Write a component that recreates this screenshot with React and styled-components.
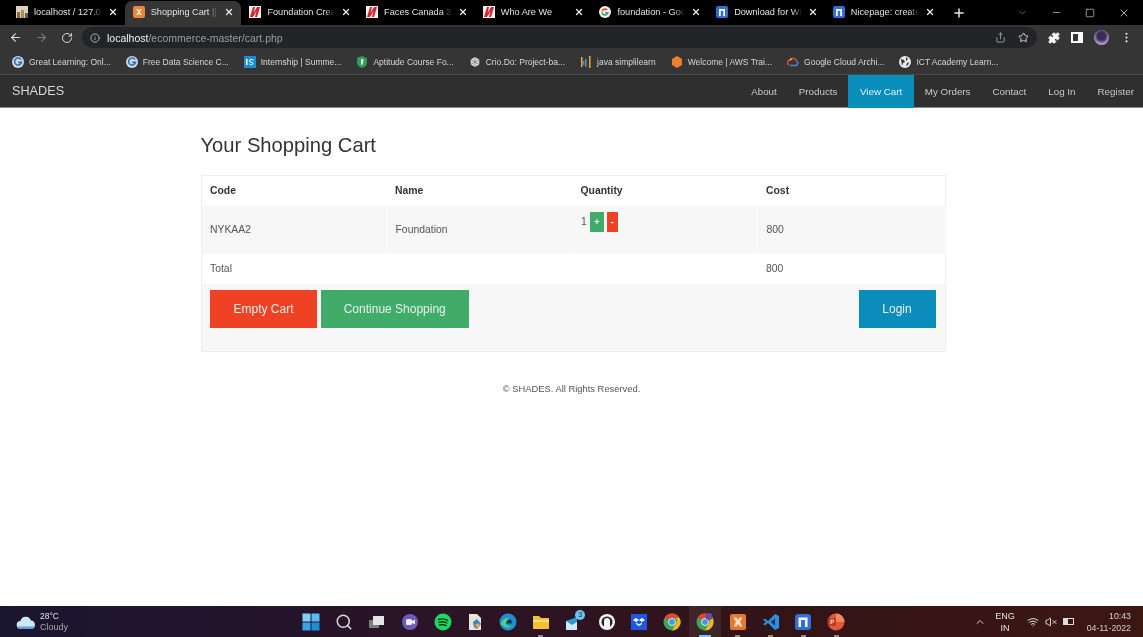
import styled, { createGlobalStyle } from "styled-components";
import {
  ArrowLeft,
  ArrowRight,
  RotateCw,
  Info,
  Share,
  Star,
  Puzzle,
  X,
  Plus,
  Minus,
  Square,
  ChevronDown,
  ChevronUp,
  Search,
  Wifi,
  VolumeX,
  MoreVertical,
} from "lucide-react";

const GlobalStyle = createGlobalStyle`
  html, body {
    margin: 0;
    padding: 0;
    background: #fff;
    font-family: "Liberation Sans", Arial, sans-serif;
  }
  * { box-sizing: border-box; }
`;

// favicons used in tabs and bookmarks
function Fav({ kind, size = 12 }) {
  const common = { width: size, height: size, viewBox: "0 0 12 12" };
  if (kind === "pma")
    return (
      <svg {...common}>
        <rect width="12" height="12" fill="#d8d2c4" />
        <rect x="1" y="6" width="3" height="6" fill="#8a6a3a" />
        <rect x="5" y="4" width="3" height="8" fill="#b58b4a" />
        <rect x="9" y="7" width="3" height="5" fill="#5a5a60" />
      </svg>
    );
  if (kind === "xampp")
    return (
      <svg {...common}>
        <rect width="12" height="12" rx="2" fill="#e8873a" />
        <path d="M3 3l2.2 3L3 9h2l1-1.4L7 9h2L6.800 6 9 3H7L6 4.400 5 3z" fill="#fbe3c8" />
      </svg>
    );
  if (kind === "nykaa")
    return (
      <svg {...common}>
        <rect width="12" height="12" fill="#f3f0ee" />
        <path d="M1 11L4 1h2L4.500 7 8 1h3L8 11H6l1.500-6L4 11z" fill="#d8232f" />
      </svg>
    );
  if (kind === "google")
    return (
      <svg {...common}>
        <circle cx="6" cy="6" r="6" fill="#f4f4f4" />
        <path d="M6 2.200A3.800 3.800 0 0 0 2.600 4.300L4 5.300A2.200 2.200 0 0 1 7.500 4.500L8.700 3.300A3.800 3.800 0 0 0 6 2.200z" fill="#ea4335" />
        <path d="M2.600 4.300a3.800 3.800 0 0 0 0 3.400L4 6.700a2.200 2.200 0 0 1 0-1.400z" fill="#fbbc05" />
        <path d="M2.600 7.700A3.800 3.800 0 0 0 8.700 8.700L7.400 7.700A2.200 2.200 0 0 1 4 6.700z" fill="#34a853" />
        <path d="M9.800 6H6v1.500h2a2 2 0 0 1-.6.200l1.300 1A3.800 3.800 0 0 0 9.800 6z" fill="#4285f4" />
      </svg>
    );
  if (kind === "nicepage")
    return (
      <svg {...common}>
        <rect width="12" height="12" rx="2" fill="#2f6fd6" />
        <path d="M3 10V3h6v7H7.300V4.700H4.700V10z" fill="#fff" />
      </svg>
    );
  if (kind === "gl")
    return (
      <svg {...common}>
        <circle cx="6" cy="6" r="6" fill="#cfd8e6" />
        <path d="M9 3.600A3.500 3.500 0 1 0 9.500 6.400H6.200" fill="none" stroke="#2f6db5" strokeWidth="1.600" />
      </svg>
    );
  if (kind === "is")
    return (
      <svg {...common}>
        <rect width="12" height="12" fill="#1b8fd6" />
        <path d="M9.500 4.200C8 3 5.400 3.200 5.400 4.800c0 1.900 3.600 1 3.600 2.700 0 1.200-2.200 1.300-3.700.5" fill="none" stroke="#fff" strokeWidth="1" />
        <path d="M2 3h1.500v6H2z" fill="#fff" />
      </svg>
    );
  if (kind === "apt")
    return (
      <svg {...common}>
        <path d="M6 0l5 2v5c0 2.500-2.500 4-5 5-2.500-1-5-2.500-5-5V2z" fill="#2f9e55" />
        <path d="M5 3h2.400v3L6 9H5z" fill="#e8f5ec" />
      </svg>
    );
  if (kind === "crio")
    return (
      <svg {...common}>
        <path d="M6 1l4.300 2.500v5L6 11 1.700 8.500v-5z" fill="#d8d8d8" />
        <path d="M6 1v10M1.700 3.500l8.600 5M10.300 3.500l-8.600 5" stroke="#666" strokeWidth=".6" />
      </svg>
    );
  if (kind === "java")
    return (
      <svg {...common}>
        <rect x="1" y="1" width="1.600" height="10" fill="#e2a63b" />
        <rect x="5" y="3" width="1.600" height="8" fill="#4c8fc9" />
        <rect x="9" y="0" width="1.600" height="12" fill="#e2a63b" />
        <rect x="3" y="5" width="1.400" height="4" fill="#4c8fc9" />
      </svg>
    );
  if (kind === "aws")
    return (
      <svg {...common}>
        <path d="M6 0l5 3v6l-5 3-5-3V3z" fill="#ee7f2d" />
      </svg>
    );
  if (kind === "gcloud")
    return (
      <svg {...common}>
        <path d="M2 9a2.500 2.500 0 0 1 1-4.800 3.500 3.500 0 0 1 6.500 1" fill="none" stroke="#ea4335" strokeWidth="1.600" />
        <path d="M9.500 5.200A2.300 2.300 0 0 1 9 9.500H6" fill="none" stroke="#4285f4" strokeWidth="1.600" />
        <path d="M6 9.500H3" fill="none" stroke="#34a853" strokeWidth="1.600" />
        <path d="M3 4.200a3 3 0 0 1 2-1.500" fill="none" stroke="#fbbc05" strokeWidth="1.600" />
      </svg>
    );
  return (
    <svg {...common}>
      <circle cx="6" cy="6" r="6" fill="#e8eaed" />
      <path d="M2 3l3 1 1 2-2 1-1 3zM7 1l2 2-2 2zM8 7l2-1-1 3-2 1z" fill="#35363a" />
    </svg>
  );
}

// taskbar pictures
function TaskIcon({ kind }) {
  const common = { width: 18, height: 18, viewBox: "0 0 18 18" };
  switch (kind) {
    case "win":
      return (
        <svg {...common}>
          <rect x="0.500" y="0.500" width="8" height="8" fill="#7fd2f5" />
          <rect x="9.500" y="0.500" width="8" height="8" fill="#55bdf0" />
          <rect x="0.500" y="9.500" width="8" height="8" fill="#35a5e6" />
          <rect x="9.500" y="9.500" width="8" height="8" fill="#1f8cd6" />
        </svg>
      );
    case "task":
      return (
        <svg {...common}>
          <rect x="1" y="7" width="10" height="8" fill="#7d7d7d" />
          <rect x="5" y="3" width="11" height="9" fill="#e4e4e4" />
        </svg>
      );
    case "meet":
      return (
        <svg {...common}>
          <circle cx="9" cy="9" r="8" fill="#6a5ac0" />
          <rect x="5" y="6" width="6" height="6" rx="1.500" fill="#f0eefa" />
          <path d="M11 8l3-1.500v5L11 10z" fill="#f0eefa" />
        </svg>
      );
    case "spotify":
      return (
        <svg {...common}>
          <circle cx="9" cy="9" r="8.500" fill="#1ed760" />
          <path d="M4.500 6.500c3-1 6.500-.7 9 .8M5 9.300c2.500-.8 5.500-.5 7.800.7M5.500 12c2-.6 4.500-.4 6.500.6" fill="none" stroke="#10301c" strokeWidth="1.400" strokeLinecap="round" />
        </svg>
      );
    case "file":
      return (
        <svg {...common}>
          <path d="M3 1h8l4 4v12H3z" fill="#e9e4d8" />
          <path d="M7 9l4-3 4 5-4 5-3-2z" fill="#2f86c9" />
          <path d="M9 12l3-2 2 2-3 3z" fill="#f0a830" />
        </svg>
      );
    case "edge":
      return (
        <svg {...common}>
          <circle cx="9" cy="9" r="8.500" fill="#1c8fd0" />
          <path d="M2 11c1-5 6-7 9-5 2 1 2.500 3 1.500 4H7c0 3 4 4 7 2.500A8 8 0 0 1 2 11z" fill="#55d07c" />
          <path d="M7 10.500h5.500c1-1.500.5-3-1-4.200C9 5.500 7.300 8 7 10.500z" fill="#0c3c66" />
        </svg>
      );
    case "folder":
      return (
        <svg {...common}>
          <path d="M1 3h6l2 2h8v11H1z" fill="#f2c230" />
          <rect x="1" y="7" width="16" height="2" fill="#fbe27a" />
        </svg>
      );
    case "mail":
      return (
        <svg {...common}>
          <path d="M1 8l11-4v13H1z" fill="#2b9ad6" />
          <path d="M1 8l6 4 5-3v8H1z" fill="#cbe9f8" />
        </svg>
      );
    case "circle":
      return (
        <svg {...common}>
          <circle cx="9" cy="9" r="8" fill="#f2f2f2" />
          <circle cx="9" cy="9" r="5.500" fill="#262020" />
          <path d="M6 15V8a3 3 0 0 1 6 0v7z" fill="#f2f2f2" />
        </svg>
      );
    case "dropbox":
      return (
        <svg {...common}>
          <rect x="1" y="1" width="16" height="16" fill="#1f58e0" />
          <path d="M6 5l3 2-3 2-3-2zM12 5l3 2-3 2-3-2zM6 9.500l3 2 3-2v1.500l-3 2-3-2z" fill="#fff" />
        </svg>
      );
    case "chrome":
    case "canary":
      return (
        <svg {...common}>
          <circle cx="9" cy="9" r="8.500" fill="#3aa757" />
          <path d="M9 .5a8.500 8.500 0 0 1 7.400 4.250H9a4.250 4.250 0 0 0-3.700 2.100L1.600 4.750A8.500 8.500 0 0 1 9 .5z" fill="#ea4335" />
          <path d="M16.400 4.750A8.500 8.500 0 0 1 9 17.500l3.700-6.400a4.250 4.250 0 0 0 0-6.350z" fill="#f3b71c" />
          <circle cx="9" cy="9" r="3.500" fill="#4d90e8" stroke="#fff" strokeWidth=".8" />
          {kind === "canary" && <circle cx="13" cy="3.500" r="3.500" fill="#6a4a9a" />}
        </svg>
      );
    case "xampp":
      return (
        <svg {...common}>
          <rect x="1" y="1" width="16" height="16" rx="2" fill="#e8772e" />
          <path d="M4.500 4.500h3L9 7l1.500-2.500h3L11 9l2.500 4.500h-3L9 11l-1.500 2.500h-3L7 9z" fill="#fbe3c8" />
        </svg>
      );
    case "vscode":
      return (
        <svg {...common}>
          <path d="M13 1l4 2v12l-4 2-7-7-3 2.500L1 11l3-2-3-2 2-1.500L6 8z" fill="#2a8fe0" />
          <path d="M13 5.500L9 9l4 3.500z" fill="#1f2240" />
        </svg>
      );
    case "nicepage":
      return (
        <svg {...common}>
          <rect x="1" y="1" width="16" height="16" rx="3" fill="#2f6fd6" />
          <path d="M4.500 14V4.500h9V14H11V7H7v7z" fill="#fff" />
        </svg>
      );
    default:
      return (
        <svg {...common}>
          <circle cx="9" cy="9" r="8.500" fill="#e2583a" />
          <path d="M9 .5a8.500 8.500 0 0 1 8.500 8.500H9z" fill="#f08a5d" />
          <rect x="1" y="5" width="8" height="8" rx="1" fill="#c4391d" />
          <path d="M4 7v4M4 7h1.500a1.200 1.200 0 0 1 0 2.400H4" fill="none" stroke="#fff" strokeWidth=".9" />
        </svg>
      );
  }
}

const tabs = [
  { id: 1, fav: "pma", title: "localhost / 127.0.0" },
  { id: 2, fav: "xampp", title: "Shopping Cart || S", active: true },
  { id: 3, fav: "nykaa", title: "Foundation Crea" },
  { id: 4, fav: "nykaa", title: "Faces Canada 3 In" },
  { id: 5, fav: "nykaa", title: "Who Are We" },
  { id: 6, fav: "google", title: "foundation - Goo" },
  { id: 7, fav: "nicepage", title: "Download for Wi" },
  { id: 8, fav: "nicepage", title: "Nicepage: create" },
];

const bookmarks = [
  { fav: "gl", title: "Great Learning: Onl..." },
  { fav: "gl", title: "Free Data Science C..." },
  { fav: "is", title: "Internship | Summe..." },
  { fav: "apt", title: "Aptitude Course Fo..." },
  { fav: "crio", title: "Crio.Do: Project-ba..." },
  { fav: "java", title: "java simplilearn" },
  { fav: "aws", title: "Welcome | AWS Trai..." },
  { fav: "gcloud", title: "Google Cloud Archi..." },
  { fav: "globe", title: "ICT Academy Learn..." },
];

const navLinks = ["About", "Products", "View Cart", "My Orders", "Contact", "Log In", "Register"];

const taskIcons = [
  { kind: "win" },
  { kind: "search" },
  { kind: "task" },
  { kind: "meet" },
  { kind: "spotify" },
  { kind: "file" },
  { kind: "edge" },
  { kind: "folder", dot: true },
  { kind: "mail", badge: "3" },
  { kind: "circle" },
  { kind: "dropbox" },
  { kind: "chrome" },
  { kind: "canary", current: true },
  { kind: "xampp", dot: true },
  { kind: "vscode", dot: true },
  { kind: "nicepage", dot: true },
  { kind: "ppt", dot: true },
];

export default function App() {
  return (
    <Screen>
      <GlobalStyle />
      <TabStrip>
        {tabs.map(t => (
          <Tab key={t.id} $active={t.active}>
            <Fav kind={t.fav} />
            <TabTitle>{t.title}</TabTitle>
            <X size={10} strokeWidth={3} color="#e8eaed" />
          </Tab>
        ))}
        <NewTab>
          <Plus size={14} strokeWidth={2.5} />
        </NewTab>
        <WindowControls>
          <ChevronDown size={11} color="#666" />
          <Minus size={11} color="#999" />
          <Square size={10} color="#aaa" />
          <X size={12} color="#aaa" />
        </WindowControls>
      </TabStrip>

      <Toolbar>
        <NavButtons>
          <ArrowLeft size={13} color="#d8dadd" />
          <ArrowRight size={13} color="#77797c" />
          <RotateCw size={12} color="#d8dadd" />
        </NavButtons>
        <Omnibox>
          <Info size={10} color="#c4c6c9" />
          <Url>
            <b>localhost</b>/ecommerce-master/cart.php
          </Url>
          <OmniActions>
            <Share size={11} color="#9a9ca0" />
            <Star size={11} color="#d8dadd" />
          </OmniActions>
        </Omnibox>
        <Extensions>
          <Puzzle size={12} color="#fff" fill="#fff" />
          <SidePanel />
          <Avatar />
          <MoreVertical size={13} color="#e8eaed" />
        </Extensions>
      </Toolbar>

      <BookmarkBar>
        {bookmarks.map(b => (
          <Bookmark key={b.title}>
            <Fav kind={b.fav} />
            <span>{b.title}</span>
          </Bookmark>
        ))}
      </BookmarkBar>

      <SiteNav>
        <Brand>SHADES</Brand>
        <NavList>
          {navLinks.map(l => (
            <NavLink key={l} $active={l === "View Cart"}>
              {l}
            </NavLink>
          ))}
        </NavList>
      </SiteNav>

      <Main>
        <Heading>Your Shopping Cart</Heading>
        <CartTable>
          <thead>
            <tr>
              <th>Code</th>
              <th>Name</th>
              <th>Quantity</th>
              <th>Cost</th>
            </tr>
          </thead>
          <tbody>
            <ItemRow>
              <td>NYKAA2</td>
              <td>Foundation</td>
              <QtyCell>
                <Qty>
                  1<QtyButton $bg="#41ab6a" $w={14}>+</QtyButton>
                  <QtyButton $bg="#ef4123" $w={11}>-</QtyButton>
                </Qty>
              </QtyCell>
              <td>800</td>
            </ItemRow>
            <TotalRow>
              <td colSpan={3}>Total</td>
              <td>800</td>
            </TotalRow>
            <tr>
              <ActionCell colSpan={4}>
                <Actions>
                  <ActionButton $bg="#ef4123" $w={107}>Empty Cart</ActionButton>
                  <ActionButton $bg="#41ab6a" $w={148.500}>Continue Shopping</ActionButton>
                  <ActionButton $bg="#0b8dbb" $w={77} $push>Login</ActionButton>
                </Actions>
              </ActionCell>
            </tr>
          </tbody>
        </CartTable>
        <Copyright>© SHADES. All Rights Reserved.</Copyright>
      </Main>

      <Taskbar>
        <Weather>
          <svg width="20" height="14" viewBox="0 0 20 14">
            <path d="M5 14a4 4 0 0 1-.6-8A5.500 5.500 0 0 1 15 5.500 4.300 4.300 0 0 1 15.500 14z" fill="#cfe6f8" />
            <path d="M1.500 11.500h17a4 4 0 0 1-3 2.500H5a4 4 0 0 1-3.500-2.500z" fill="#5f9fe0" />
          </svg>
          <WeatherText>
            <span>28°C</span>
            <small>Cloudy</small>
          </WeatherText>
        </Weather>
        <TaskIcons>
          {taskIcons.map(i => (
            <TaskSlot key={i.kind} $current={i.current}>
              {i.kind === "search" ? (
                <Search size={18} color="#d8d8d8" />
              ) : (
                <TaskIcon kind={i.kind} />
              )}
              {i.badge && <Badge>{i.badge}</Badge>}
              {(i.dot || i.current) && <RunDot $current={i.current} />}
            </TaskSlot>
          ))}
        </TaskIcons>
        <Tray>
          <ChevronUp size={12} color="#ccc" />
          <Lang>
            ENG
            <br />
            IN
          </Lang>
          <TrayIcons>
            <Wifi size={12} color="#ddd" />
            <VolumeX size={12} color="#ddd" />
            <Battery />
          </TrayIcons>
          <Clock>
            10:43
            <br />
            04-11-2022
          </Clock>
        </Tray>
      </Taskbar>
    </Screen>
  );
}

const Screen = styled.div`
  display: flex;
  flex-direction: column;
  height: 100vh;
  overflow: hidden;
  filter: blur(0.35px);
`;
// browser chrome

const TabStrip = styled.div`
  display: flex;
  align-items: flex-end;
  height: 25px;
  padding-left: 8px;
  background: #000;
`;
const Tab = styled.div`
  display: flex;
  align-items: center;
  gap: 6px;
  flex: none;
  width: 116.7px;
  height: 24px;
  padding: 0 7px 2px 8px;
  border-radius: 7px 7px 0 0;
  color: #dfe1e4;
  font-size: 9.2px;
  background: ${props => (props.$active ? "#353535" : "transparent")};
`;
const TabTitle = styled.span`
  flex: 1;
  min-width: 0;
  white-space: nowrap;
  -webkit-mask-image: linear-gradient(to right, #000 85%, transparent);
  mask-image: linear-gradient(to right, #000 85%, transparent);
`;
const NewTab = styled.div`
  display: flex;
  align-self: center;
  margin-left: 10px;
  color: #e8eaed;
`;
const WindowControls = styled.div`
  display: flex;
  align-items: center;
  gap: 23px;
  align-self: center;
  margin-left: auto;
  padding-right: 13px;
`;

const Toolbar = styled.div`
  display: flex;
  align-items: center;
  height: 25px;
  background: #353535;
`;
const NavButtons = styled.div`
  display: flex;
  align-items: center;
  gap: 13px;
  width: 82px;
  padding-left: 9px;
`;
const Omnibox = styled.div`
  display: flex;
  align-items: center;
  gap: 7px;
  width: 955px;
  height: 21px;
  padding: 0 8px;
  border-radius: 11px;
  background: #232427;
`;
const Url = styled.span`
  color: #9a9ca0;
  font-size: 10.5px;
  b {
    color: #f0f0f0;
    font-weight: 400;
  }
`;
const OmniActions = styled.div`
  display: flex;
  align-items: center;
  gap: 12px;
  margin-left: auto;
`;
const Extensions = styled.div`
  display: flex;
  align-items: center;
  gap: 11px;
  padding-left: 11px;
`;
const SidePanel = styled.span`
  width: 12px;
  height: 11px;
  border: 2px solid #fff;
  border-right-width: 5px;
`;
const Avatar = styled.span`
  width: 15px;
  height: 15px;
  border-radius: 50%;
  background: radial-gradient(circle at 50% 40%, #3a2a55 35%, #b9a4d8 70%);
`;

const BookmarkBar = styled.div`
  display: flex;
  align-items: center;
  gap: 15px;
  height: 25px;
  padding-left: 12px;
  border-bottom: 1px solid #4a4a4a;
  background: #353535;
`;
const Bookmark = styled.div`
  display: flex;
  align-items: center;
  gap: 5px;
  color: #d5d7da;
  font-size: 8.500px;
  white-space: nowrap;
`;
// site header

const SiteNav = styled.nav`
  display: flex;
  align-items: center;
  justify-content: space-between;
  height: 33px;
  padding: 0 0 0 12px;
  border-bottom: 1px solid #8a8a8a;
  background: #2f2f2f;
`;
const Brand = styled.div`
  color: #d8d8d8;
  font-size: 12.700px;
`;
const NavList = styled.div`
  display: flex;
  align-self: stretch;
  margin: 0 -2px -1px 0;
`;
const NavLink = styled.a`
  display: flex;
  align-items: center;
  padding: 0 ${props => (props.$active ? "11.5px" : "11px")};
  color: ${props => (props.$active ? "#e4f2f8" : "#c8c8c8")};
  font-size: 9.800px;
  background: ${props => (props.$active ? "#0b8dbb" : "transparent")};
`;

const Main = styled.main`
  flex: 1;
  padding-top: 25px;
  background: #fff;
`;
const Heading = styled.h1`
  margin: 0 0 18px 200.500px;
  color: #333;
  font-size: 20.200px;
  font-weight: 400;
  line-height: 24px;
`;
const CartTable = styled.table`
  width: 745px;
  margin-left: 200.500px;
  border: 1px solid #eee;
  border-collapse: collapse;
  table-layout: fixed;
  font-size: 10.400px;
  color: #555;
  th {
    width: 185.500px;
    height: 30px;
    padding: 0 0 0 8.500px;
    color: #333;
    font-weight: 700;
    text-align: left;
  }
  th:last-child {
    width: auto;
  }
  td {
    padding: 0 0 0 8.500px;
  }
`;
const ItemRow = styled.tr`
  height: 48px;
  background: #f7f7f7;
  td {
    border-right: 1px solid #fbfbfb;
  }
`;
const QtyCell = styled.td`
  vertical-align: top;
  padding-top: 6px !important;
`;
const Qty = styled.div`
  display: flex;
  align-items: center;
  gap: 3px;
  line-height: 14px;
`;
const QtyButton = styled.span`
  display: flex;
  align-items: center;
  justify-content: center;
  width: ${props => props.$w}px;
  height: 20px;
  color: #fff;
  font-size: 9px;
  font-weight: 700;
  background: ${props => props.$bg};
`;
const TotalRow = styled.tr`
  height: 30px;
`;
const ActionCell = styled.td`
  height: 68px;
  vertical-align: top;
  padding: 6px 9px 0 8.500px !important;
  background: #f7f7f7;
`;
const Actions = styled.div`
  display: flex;
  gap: 3.500px;
`;
const ActionButton = styled.button`
  width: ${props => props.$w}px;
  height: 38px;
  margin-left: ${props => (props.$push ? "auto" : "0")};
  border: 0;
  color: #e8f0ec;
  font-family: inherit;
  font-size: 12px;
  background: ${props => props.$bg};
`;
const Copyright = styled.p`
  margin: 31px 0 0;
  color: #555;
  font-size: 9.400px;
  text-align: center;
`;
// windows taskbar

const Taskbar = styled.footer`
  display: grid;
  grid-template-columns: 295px 558px 1fr;
  align-items: center;
  height: 31px;
  color: #e4e4e4;
  background: linear-gradient(to right, #1a1530, #2a1428 35%, #331416 70%, #3c1613);
`;
const Weather = styled.div`
  display: flex;
  align-items: center;
  gap: 4px;
  padding-left: 16px;
`;
const WeatherText = styled.div`
  display: flex;
  flex-direction: column;
  font-size: 8.500px;
  line-height: 11px;
  small {
    color: #a9a6b0;
    font-size: 9px;
  }
`;
const TaskIcons = styled.div`
  display: flex;
`;
const TaskSlot = styled.div`
  position: relative;
  display: flex;
  align-items: center;
  justify-content: center;
  flex: none;
  width: 32.800px;
  height: 31px;
  background: ${props => (props.$current ? "rgba(255,255,255,0.07)" : "transparent")};
`;
const Badge = styled.span`
  position: absolute;
  top: 4px;
  right: 5px;
  width: 10px;
  height: 10px;
  border-radius: 50%;
  color: #123;
  font-size: 7px;
  line-height: 10px;
  text-align: center;
  background: #6cc6ee;
`;
const RunDot = styled.span`
  position: absolute;
  bottom: 0;
  left: 50%;
  width: ${props => (props.$current ? "12px" : "5px")};
  height: 2px;
  margin-left: ${props => (props.$current ? "-6px" : "-2.500px")};
  background: ${props => (props.$current ? "#6cc6ee" : "#9a8a7a")};
`;
const Tray = styled.div`
  display: flex;
  align-items: center;
  padding-left: 121px;
  font-size: 9px;
`;
const Lang = styled.div`
  width: 20px;
  margin-left: 9px;
  line-height: 12px;
  text-align: center;
`;
const TrayIcons = styled.div`
  display: flex;
  align-items: center;
  gap: 6px;
  margin-left: 12px;
`;
const Battery = styled.span`
  width: 11px;
  height: 7px;
  border: 1px solid #ddd;
  background: linear-gradient(to right, #ddd 50%, transparent 50%);
`;
const Clock = styled.div`
  margin-left: auto;
  padding-right: 12px;
  color: #d4cfcf;
  font-size: 8.800px;
  line-height: 12px;
  text-align: right;
`;
